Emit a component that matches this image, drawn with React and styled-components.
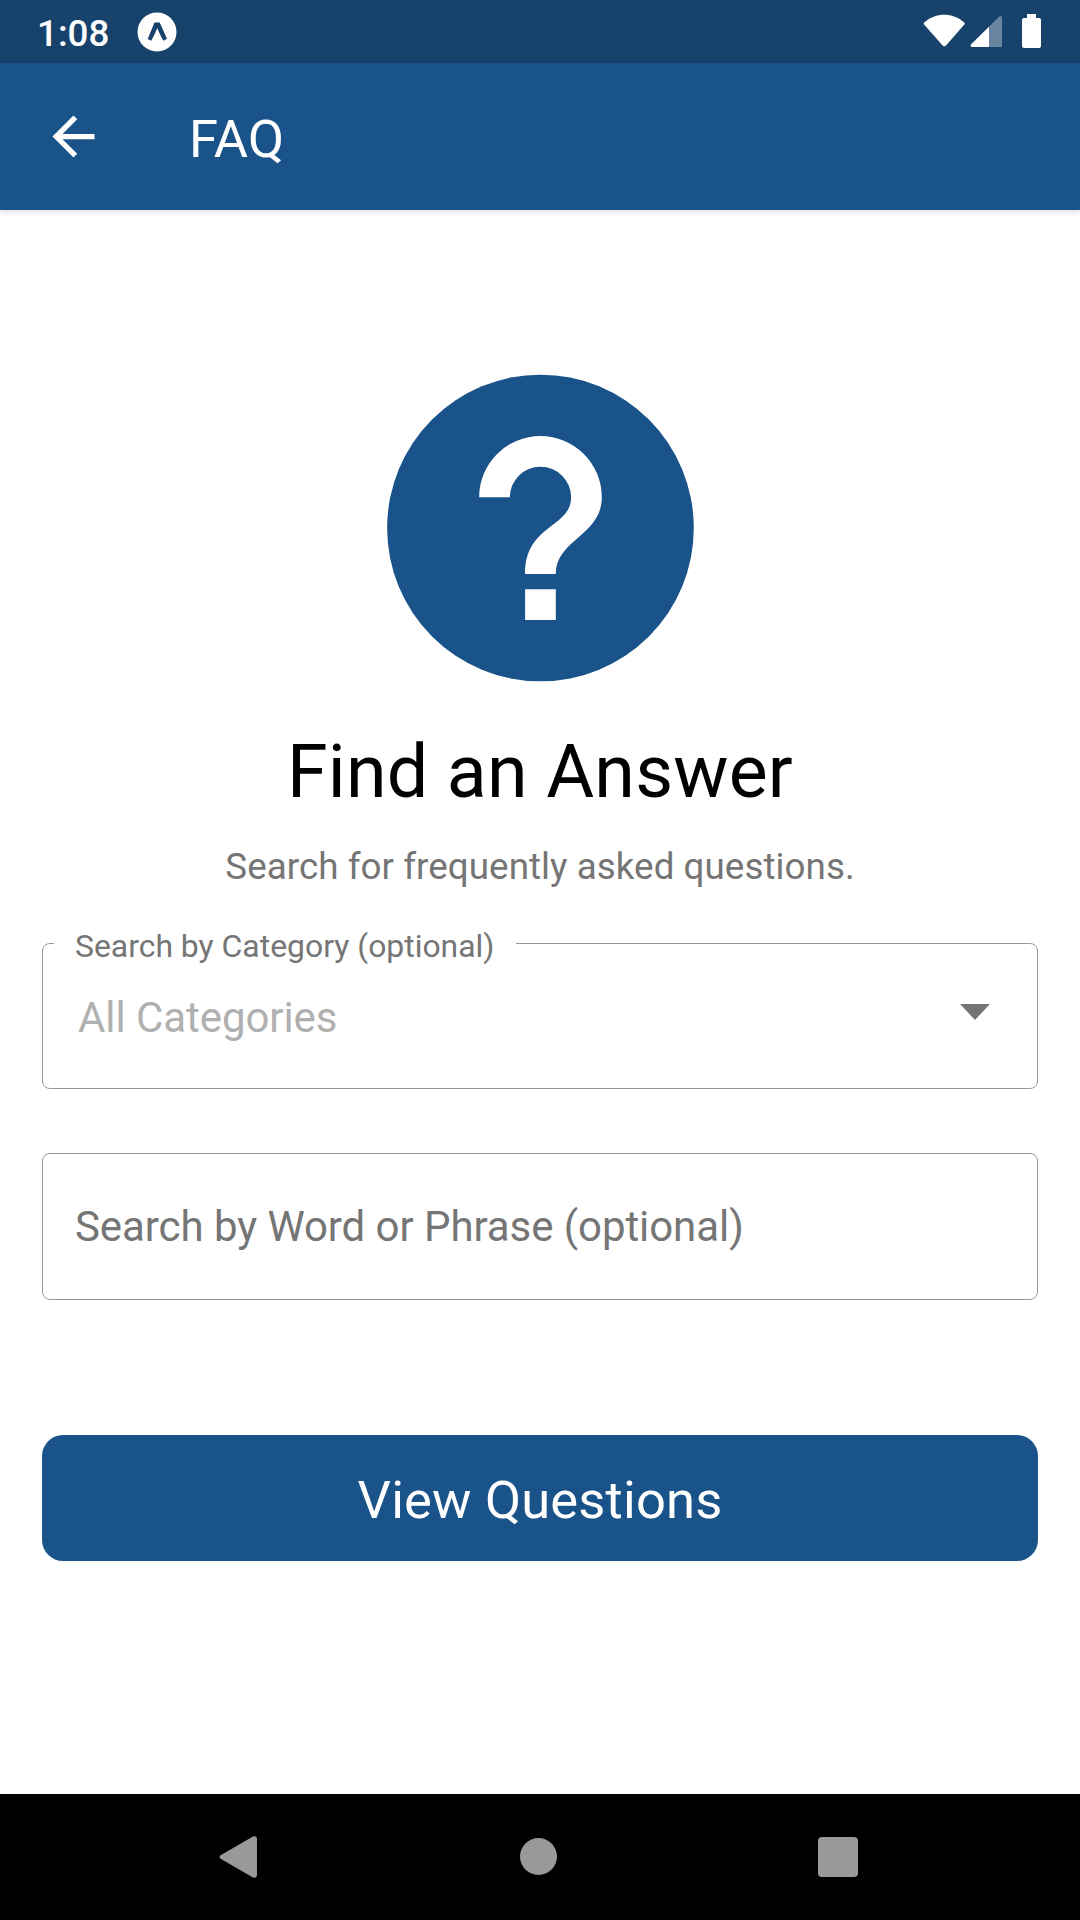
import React from "react";
import styled, { createGlobalStyle } from "styled-components";
import { MdArrowBack } from "react-icons/md";

const theme = {
  blueColor: "#1a5389",
  darkBlueColor: "#17426c",
  whiteColor: "#ffffff",
  grayColor: "#757575",
  placeholderColor: "#b0b0b0",
  borderColor: "#979797",
  navColor: "#999999",
};

const GlobalStyle = createGlobalStyle`
  * {
    box-sizing: border-box;
  }
  body {
    margin: 0;
    background-color: ${theme.whiteColor};
    font-family: Roboto, "Liberation Sans", sans-serif;
  }
`;

const Screen = styled.div`
  display: flex;
  flex-direction: column;
  width: 1080px;
  height: 1920px;
  overflow: hidden;
`;

const StatusBar = styled.div`
  display: flex;
  align-items: center;
  justify-content: space-between;
  height: 63px;
  padding: 0 39px 0 37px;
  background-color: ${theme.darkBlueColor};
`;

const StatusGroup = styled.div`
  display: flex;
  align-items: center;
`;

const Time = styled.span`
  width: 100px;
  padding-top: 4px;
  color: ${theme.whiteColor};
  font-size: 36.75px;
  font-weight: 500;
  line-height: 44px;
`;

const Header = styled.header`
  display: flex;
  align-items: center;
  height: 147px;
  padding: 0 42px;
  background-color: ${theme.blueColor};
  box-shadow: 0 2px 5px rgba(0, 0, 0, 0.14);
`;

const BackBtn = styled.button`
  display: flex;
  padding: 0;
  border: none;
  background: none;
  color: ${theme.whiteColor};
  font-size: 63px;
  cursor: pointer;
`;

const HeaderTitle = styled.h1`
  margin: 0 0 0 84px;
  padding-top: 5px;
  color: ${theme.whiteColor};
  font-size: 52.5px;
  font-weight: 400;
  letter-spacing: 0.2px;
  line-height: 62px;
`;

const Content = styled.main`
  display: flex;
  flex: 1;
  flex-direction: column;
  align-items: center;
  padding: 134px 42px 0;
`;

const Title = styled.h2`
  margin: 16px 0 0;
  color: #000000;
  font-size: 73.5px;
  font-weight: 400;
  letter-spacing: 0.2px;
  line-height: 88px;
`;

const Subtitle = styled.p`
  margin: 29px 0 0;
  color: ${theme.grayColor};
  font-size: 36.75px;
  letter-spacing: 0.06px;
  line-height: 44px;
`;

const Field = styled.div`
  position: relative;
  display: flex;
  justify-content: space-between;
  width: 996px;
  height: ${(props) => props.$height}px;
  margin-top: ${(props) => props.$gap}px;
  padding: ${(props) => props.$top}px 47px 0 ${(props) => props.$indent}px;
  border: 1px solid ${theme.borderColor};
  border-radius: 8px;
`;

// sits on top of the border and cuts a gap in it
const FieldLabel = styled.span`
  position: absolute;
  top: -19px;
  left: 11px;
  width: 462px;
  padding-left: 21px;
  background-color: ${theme.whiteColor};
  color: ${theme.grayColor};
  font-size: 31.9px;
  line-height: 42px;
  white-space: nowrap;
`;

const FieldText = styled.span`
  color: ${(props) => props.$color};
  font-size: 42px;
  letter-spacing: -0.07px;
  line-height: 50px;
`;

const SubmitBtn = styled.button`
  width: 996px;
  height: 126px;
  margin-top: 135px;
  padding: 4px 0 0;
  border: none;
  border-radius: 21px;
  background-color: ${theme.blueColor};
  color: ${theme.whiteColor};
  font-family: inherit;
  font-size: 52.5px;
  letter-spacing: 0.17px;
  cursor: pointer;
`;

const NavBar = styled.nav`
  display: flex;
  align-items: center;
  justify-content: space-between;
  height: 126px;
  padding: 0 222px 0 219px;
  background-color: #000000;
`;

const DropdownIcon = styled.svg`
  margin-top: 11px;
`;

const HelpIcon = () => (
  <svg width="368" height="368" viewBox="-0.03 0 24 24">
    <circle cx="12" cy="12" r="10" fill={theme.blueColor} />
    <path
      d="M11 18h2v-2h-2v2M12 6a4 4 0 0 0-4 4h2a2 2 0 0 1 2-2 2 2 0 0 1 2 2c0 2-3 1.750-3 5h2c0-2.250 3-2.500 3-5a4 4 0 0 0-4-4z"
      fill={theme.whiteColor}
    />
  </svg>
);

const ExpoIcon = () => (
  <svg width="40" height="40" viewBox="0 0 40 40">
    <circle cx="20" cy="20" r="19.5" fill={theme.whiteColor} />
    <path
      d="M17.500 10.500h5.200L30 26.700l-3.400 2.100c-2.200-3-4.400-8-6.400-12.800-1.800 4.600-3.800 9-6 12.800L10.700 26.900z"
      fill={theme.darkBlueColor}
    />
  </svg>
);

const StatusIcons = () => (
  <svg width="118" height="36" viewBox="0 0 118 36">
    <path
      d="M1.200 8.500C13-1.800 29.500-1.800 41.300 8.500q.9.900.1 1.900L23 31.400q-1.700 1.700-3.400 0L1.100 10.400q-.8-1 .1-1.900z"
      fill={theme.whiteColor}
    />
    <path
      d="M77.500 2q1.500 0 1.500 1.500V33H49q-2-.5-1-2.500L76 2.700z"
      fill={theme.whiteColor}
      opacity="0.35"
    />
    <path d="M66 12.700V33H49q-2-.5-1-2.500z" fill={theme.whiteColor} />
    <path
      d="M104 0h9v4h3q2 0 2 2v26q0 2-2 2h-15q-2 0-2-2V6q0-2 2-2h3z"
      fill={theme.whiteColor}
    />
  </svg>
);

const ArrowDown = () => (
  <DropdownIcon width="30" height="16" viewBox="0 0 30 16">
    <path d="M0 0h30L15 16z" fill={theme.grayColor} />
  </DropdownIcon>
);

const NavBack = () => (
  <svg width="39" height="42" viewBox="0 0 39 42">
    <path
      d="M1.600 19.300 34 .6Q37.800-.8 38 3v36q-.2 3.800-4 2.400L1.600 22.700q-2.200-1.700 0-3.400z"
      fill={theme.navColor}
    />
  </svg>
);

const NavHome = () => (
  <svg width="38" height="38" viewBox="-1 0 38 38">
    <circle cx="18.500" cy="18.500" r="18.500" fill={theme.navColor} />
  </svg>
);

const NavRecent = () => (
  <svg width="40" height="40" viewBox="0 0 40 40">
    <rect width="40" height="40" rx="4" fill={theme.navColor} />
  </svg>
);

const App = () => {
  return (
    <Screen>
      <GlobalStyle />
      <StatusBar>
        <StatusGroup>
          <Time>1:08</Time>
          <ExpoIcon />
        </StatusGroup>
        <StatusIcons />
      </StatusBar>
      <Header>
        <BackBtn aria-label="Back">
          <MdArrowBack />
        </BackBtn>
        <HeaderTitle>FAQ</HeaderTitle>
      </Header>
      <Content>
        <HelpIcon />
        <Title>Find an Answer</Title>
        <Subtitle>Search for frequently asked questions.</Subtitle>
        <Field $height={146} $gap={54} $top={49} $indent={35}>
          <FieldLabel>Search by Category (optional)</FieldLabel>
          <FieldText $color={theme.placeholderColor}>All Categories</FieldText>
          <ArrowDown />
        </Field>
        <Field $height={147} $gap={64} $top={48} $indent={32}>
          <FieldText $color={theme.grayColor}>
            Search by Word or Phrase (optional)
          </FieldText>
        </Field>
        <SubmitBtn>View Questions</SubmitBtn>
      </Content>
      <NavBar>
        <NavBack />
        <NavHome />
        <NavRecent />
      </NavBar>
    </Screen>
  );
};

export default App;
